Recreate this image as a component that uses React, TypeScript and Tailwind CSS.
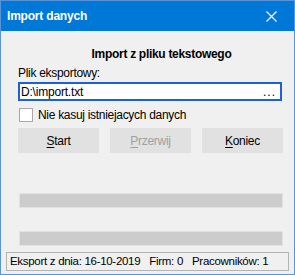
import React from "react";

const font = { fontFamily: '"Liberation Sans", Arial, sans-serif' };

function Btn({ accel, rest, disabled }: { accel: string; rest: string; disabled?: boolean }) {
  return (
    <div
      className={`w-[81px] h-[25px] flex items-center justify-center bg-[#e1e1e1] text-[12px] tracking-[-0.3px] ${
        disabled ? "text-[#a0a0a0]" : "text-black"
      }`}
    >
      <span>
        <span className="underline underline-offset-2">{accel}</span>
        {rest}
      </span>
    </div>
  );
}

export default function App() {
  return (
    <div
      className="w-[295px] h-[275px] flex flex-col bg-[#f0f0f0] border border-[#5a93d6] overflow-hidden"
      style={font}
    >
      {/* Title bar */}
      <div className="h-[30px] shrink-0 bg-[#0078d7] flex items-center justify-between pl-[6px] pr-[17px]">
        <span className="text-white text-[12px] font-bold tracking-[-0.2px]">Import danych</span>
        <svg width="11" height="11" viewBox="0 0 11 11">
          <path d="M0.5 0.5 L10.5 10.5 M10.5 0.5 L0.5 10.5" stroke="white" strokeWidth="1.2" />
        </svg>
      </div>

      {/* Body */}
      <div className="flex flex-col px-[17px]">
        <div className="mt-[15px] h-[16px] leading-[16px] text-[12px] font-bold text-black text-center pl-[28px] tracking-[-0.3px]">
          Import z pliku tekstowego
        </div>
        <div className="mt-[4px] h-[15px] leading-[15px] text-[12px] text-black tracking-[-0.3px]">Plik eksportowy:</div>
        <div className="mt-[1px] h-[19px] w-[264px] bg-white border-2 border-[#1b62d9] flex items-center justify-between pl-[1px] pr-[4px] text-[12px] text-black tracking-[-0.2px]">
          <span>D:\import.txt</span>
          <span className="tracking-[1px]">...</span>
        </div>
        <div className="mt-[7px] flex items-center gap-[5px] pl-[1px]">
          <div className="w-[14px] h-[14px] bg-white border border-[#a8a8a8]" />
          <span className="text-[12px] text-black leading-[14px] tracking-[-0.3px]">Nie kasuj istniejacych danych</span>
        </div>
        <div className="mt-[6px] flex gap-[11px] w-[265px]">
          <Btn accel="S" rest="tart" />
          <Btn accel="P" rest="rzerwij" disabled />
          <Btn accel="K" rest="oniec" />
        </div>
        <div className="mt-[40px] ml-[1px] w-[264px] h-[15px] bg-[#cccccc] border border-[#e2e2e2]" />
        <div className="mt-[23px] ml-[1px] w-[264px] h-[15px] bg-[#cccccc] border border-[#e2e2e2]" />
      </div>

      <div className="mt-[6px] ml-[5px] w-[283px] h-[19px] border border-[#b4b4b4] flex items-center gap-[9px] pl-[3px] text-[11.5px] text-black whitespace-nowrap tracking-[-0.3px]">
        <span>Eksport z dnia: 16-10-2019</span>
        <span>Firm: 0</span>
        <span>Pracowników: 1</span>
      </div>
    </div>
  );
}
